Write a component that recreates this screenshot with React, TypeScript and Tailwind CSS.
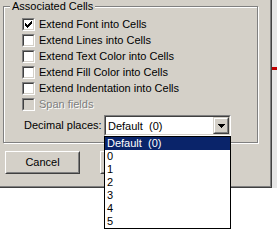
import React from "react";

const FONT = { fontFamily: '"Liberation Sans", Arial, sans-serif' };

function Check() {
  const cols = [2, 3, 4, 3, 2, 1, 0];
  return (
    <svg width="7" height="7" viewBox="0 0 7 7" shapeRendering="crispEdges" className="absolute left-[1px] top-[1px]">
      {cols.map((y, x) => (
        <rect key={x} x={x} y={y} width="1" height="3" fill="#000" />
      ))}
    </svg>
  );
}

function CheckBox({ checked = false, disabled = false }: { checked?: boolean; disabled?: boolean }) {
  return (
    <div className="w-[13px] h-[13px] shrink-0 border border-t-[#808080] border-l-[#808080] border-r-white border-b-white">
      <div
        className={`relative w-full h-full border border-t-[#404040] border-l-[#404040] border-r-[#d4d0c8] border-b-[#d4d0c8] ${
          disabled ? "bg-[#d4d0c8]" : "bg-white"
        }`}
      >
        {checked && <Check />}
      </div>
    </div>
  );
}

function Row({ label, checked, disabled }: { label: string; checked?: boolean; disabled?: boolean }) {
  return (
    <div className="flex items-center h-[13px] gap-[4px]">
      <CheckBox checked={checked} disabled={disabled} />
      <span
        className={`text-[11px] leading-[13px] whitespace-nowrap ${
          disabled ? "text-[#808080] [text-shadow:1px_1px_0_#fff]" : "text-black"
        }`}
      >
        {label}
      </span>
    </div>
  );
}

function Button({ label }: { label: string }) {
  return (
    <div className="w-[75px] h-[23px] border border-t-white border-l-white border-r-[#404040] border-b-[#404040]">
      <div className="w-full h-full flex items-center justify-center border border-t-[#d4d0c8] border-l-[#d4d0c8] border-r-[#808080] border-b-[#808080] text-[11px] text-black">
        {label}
      </div>
    </div>
  );
}

export default function App() {
  const items = ["Default  (0)", "0", "1", "2", "3", "4", "5"];
  return (
    <div className="w-[277px] h-[240px] bg-white relative overflow-hidden" style={FONT}>
      <div className="flex">
        <div className="w-[272px] h-[188px] bg-[#d4d0c8] border-r border-b border-[#404040] shadow-[inset_-1px_-1px_0_#808080] pt-[6px] pl-[3px]">
          {/* Group box */}
          <div className="relative w-[255px] h-[137px] border border-[#808080] shadow-[inset_1px_1px_0_#fff,1px_1px_0_#fff] pt-[11px] pl-[18px]">
            <span className="absolute left-[6px] top-[-7px] px-[2px] bg-[#d4d0c8] text-[11px] leading-[13px] text-black whitespace-nowrap">
              Associated Cells
            </span>
            <div className="flex flex-col gap-[3px]">
              <Row label="Extend Font into Cells" checked />
              <Row label="Extend Lines into Cells" />
              <Row label="Extend Text Color into Cells" />
              <Row label="Extend Fill Color into Cells" />
              <Row label="Extend Indentation into Cells" />
              <Row label="Span fields" disabled />
            </div>
            <div className="flex items-center mt-[4px] ml-[2px]">
              <span className="w-[80px] text-[11px] leading-[13px] text-black whitespace-nowrap">Decimal places:</span>
              <div className="w-[127px] h-[21px] border border-t-[#808080] border-l-[#808080] border-r-white border-b-white">
                <div className="w-full h-full flex border border-t-[#404040] border-l-[#404040] border-r-[#d4d0c8] border-b-[#d4d0c8] bg-white">
                  <span className="flex-1 pl-[2px] pt-[1px] text-[11px] leading-[17px] text-black whitespace-pre">Default  (0)</span>
                  <div className="w-[16px] h-full border border-t-[#d4d0c8] border-l-[#d4d0c8] border-r-[#404040] border-b-[#404040] bg-[#d4d0c8]">
                    <div className="w-full h-full flex items-center justify-center border border-t-white border-l-white border-r-[#808080] border-b-[#808080]">
                      <svg width="7" height="4" viewBox="0 0 7 4" shapeRendering="crispEdges">
                        <path d="M0 0h7v1h-1v1h-1v1h-1v1h-1v-1h-1v-1h-1v-1h-1z" fill="#000" />
                      </svg>
                    </div>
                  </div>
                </div>
              </div>
            </div>
          </div>
          {/* Buttons */}
          <div className="flex gap-[20px] mt-[8px] ml-[2px]">
            <Button label="Cancel" />
            <Button label="OK" />
          </div>
        </div>
        <div className="w-[5px] h-[188px] bg-[#e6e6e6] pt-[67px]">
          <div className="w-full h-[3px] bg-[#c00000]" />
        </div>
      </div>

      {/* Dropdown list overlay */}
      <div className="absolute left-[104px] top-[136px] w-[127px] border border-black bg-white flex flex-col">
        {items.map((it, i) => (
          <div
            key={it}
            className={`h-[13px] pl-[2px] text-[11px] leading-[13px] whitespace-pre ${
              i === 0 ? "bg-[#0a246a] text-white" : "text-black"
            }`}
          >
            {it}
          </div>
        ))}
      </div>
    </div>
  );
}
